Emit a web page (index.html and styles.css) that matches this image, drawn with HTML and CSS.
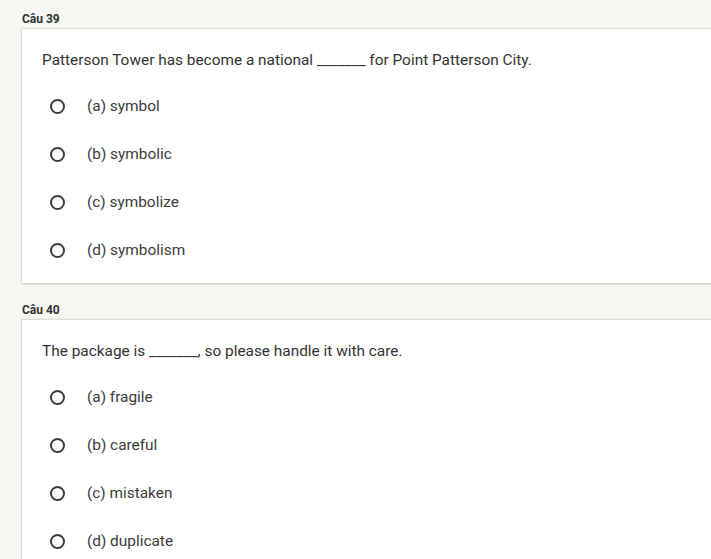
FILE: index.html
```html
<!DOCTYPE html>
<html>
<head>
<meta charset="utf-8">
<link rel="stylesheet" href="styles.css">
</head>
<body>
<div class="quiz">
  <section class="item">
    <div class="label">Câu 39</div>
    <div class="card">
      <div class="question">Patterson Tower has become a national _______ for Point Patterson City.</div>
      <div class="option"><span class="radio"></span><span class="opt-text">(a) symbol</span></div>
      <div class="option"><span class="radio"></span><span class="opt-text">(b) symbolic</span></div>
      <div class="option"><span class="radio"></span><span class="opt-text">(c) symbolize</span></div>
      <div class="option"><span class="radio"></span><span class="opt-text">(d) symbolism</span></div>
    </div>
  </section>
  <section class="item">
    <div class="label">Câu 40</div>
    <div class="card">
      <div class="question">The package is _______, so please handle it with care.</div>
      <div class="option"><span class="radio"></span><span class="opt-text">(a) fragile</span></div>
      <div class="option"><span class="radio"></span><span class="opt-text">(b) careful</span></div>
      <div class="option"><span class="radio"></span><span class="opt-text">(c) mistaken</span></div>
      <div class="option"><span class="radio"></span><span class="opt-text">(d) duplicate</span></div>
    </div>
  </section>
</div>
</body>
</html>
```
FILE: styles.css
```css
html, body {
  margin: 0;
  padding: 0;
  background: #f6f6f2;
  overflow: hidden;
  font-family: Roboto, "Liberation Sans", sans-serif;
}
.quiz {
  display: flex;
  flex-direction: column;
  gap: 19px;
  padding: 11px 0 0 22px;
  width: 740px;
}
.label {
  font-size: 12px;
  font-weight: bold;
  line-height: 16px;
  color: #333;
  margin-bottom: 1px;
}
.card {
  background: #fff;
  border-top: 1px solid #dcdcd8;
  box-shadow: 0 1px 2px rgba(0, 0, 0, 0.22), -1px 0 1px rgba(0, 0, 0, 0.06);
  padding: 21px 0 9px 20px;
}
.question {
  font-size: 15.4px;
  line-height: 20px;
  color: #333;
  margin-bottom: 12px;
}
.option {
  display: flex;
  align-items: center;
  height: 48px;
}
.radio {
  box-sizing: border-box;
  width: 15px;
  height: 15px;
  border: 2px solid #3c3c3c;
  border-radius: 50%;
  margin-left: 8px;
  margin-right: 22px;
}
.opt-text {
  font-size: 15.4px;
  color: #3c3c3c;
}
```
